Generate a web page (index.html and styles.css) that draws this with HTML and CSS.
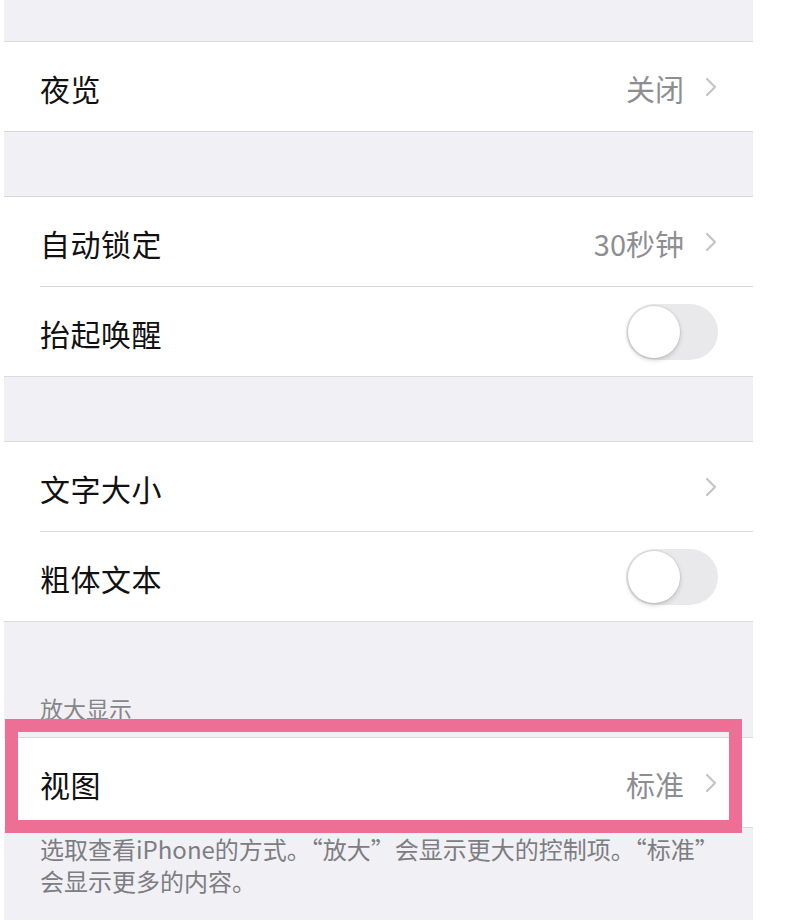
FILE: index.html
```html
<!DOCTYPE html>
<html lang="zh-CN">
<head>
<meta charset="utf-8">
<title>显示与亮度</title>
<link rel="stylesheet" href="styles.css">
</head>
<body>
<div class="panel">
  <div class="gap gap-top"></div>
  <div class="group">
    <div class="row">
      <span class="label">夜览</span>
      <span class="value">关闭</span>
      <svg class="chev" viewBox="0 0 12 20"><polyline points="2,2 10,10 2,18"/></svg>
    </div>
  </div>
  <div class="gap"></div>
  <div class="group">
    <div class="row">
      <span class="label">自动锁定</span>
      <span class="value">30秒钟</span>
      <svg class="chev" viewBox="0 0 12 20"><polyline points="2,2 10,10 2,18"/></svg>
    </div>
    <div class="row">
      <span class="label">抬起唤醒</span>
      <span class="toggle"><span class="knob"></span></span>
    </div>
  </div>
  <div class="gap"></div>
  <div class="group">
    <div class="row">
      <span class="label">文字大小</span>
      <svg class="chev" viewBox="0 0 12 20"><polyline points="2,2 10,10 2,18"/></svg>
    </div>
    <div class="row">
      <span class="label">粗体文本</span>
      <span class="toggle"><span class="knob"></span></span>
    </div>
  </div>
  <div class="header">放大显示</div>
  <div class="group">
    <div class="row row-marked">
      <span class="label">视图</span>
      <span class="value">标准</span>
      <svg class="chev" viewBox="0 0 12 20"><polyline points="2,2 10,10 2,18"/></svg>
      <span class="mark"></span>
    </div>
  </div>
  <div class="footer">选取查看iPhone的方式。“放大”会显示更大的控制项。“标准”会显示更多的内容。</div>
</div>
</body>
</html>
```
FILE: styles.css
```css
html, body {
  margin: 0;
  padding: 0;
  background: #ffffff;
}
body {
  font-family: "Noto Sans CJK SC", "Noto Sans", sans-serif;
}
.panel {
  margin-left: 4px;
  width: 749px;
  height: 920px;
  background: #f1f1f5;
  overflow: visible;
}
.gap {
  height: 64px;
}
.gap-top {
  height: 41px;
}
.group {
  background: #ffffff;
  border-top: 1px solid #dadade;
  border-bottom: 1px solid #dadade;
}
.row {
  position: relative;
  height: 89px;
  display: flex;
  align-items: center;
  padding: 0 36px 0 36px;
  box-sizing: border-box;
}
.row + .row {
  border-top: 1px solid #dadade;
  margin-left: 36px;
  padding-left: 0;
  height: 90px;
}
.label {
  flex: 1;
  font-size: 30px;
  color: #111111;
  letter-spacing: 0.5px;
  padding-top: 3px;
}
.value {
  font-size: 29px;
  color: #8e8e92;
  margin-right: 21px;
  padding-top: 3px;
}
.chev {
  width: 12px;
  height: 20px;
  fill: none;
  stroke: #c4c4c8;
  stroke-width: 2.2;
  stroke-linecap: round;
  stroke-linejoin: round;
}
.toggle {
  width: 92px;
  height: 56px;
  border-radius: 28px;
  background: #e9e9eb;
  display: flex;
  align-items: center;
  padding: 2px;
  box-sizing: border-box;
  margin-right: -1px;
}
.knob {
  width: 52px;
  height: 52px;
  border-radius: 50%;
  background: #ffffff;
  box-shadow: 0 2px 5px rgba(0, 0, 0, 0.18), 0 0 0 1px rgba(0, 0, 0, 0.05);
}
.header {
  height: 115px;
  box-sizing: border-box;
  display: flex;
  align-items: flex-end;
  padding: 0 36px 13px;
  font-size: 23px;
  line-height: 32px;
  color: #86868a;
}
.header + .group {
  border-top: 1px solid #dadade;
}
.footer {
  padding: 5px 36px 0;
  font-size: 24px;
  line-height: 32px;
  color: #7d7d82;
}
.mark {
  position: absolute;
  left: 1px;
  right: 11px;
  top: -19px;
  bottom: -6px;
  border: 13px solid #ed6f96;
  pointer-events: none;
}
```
